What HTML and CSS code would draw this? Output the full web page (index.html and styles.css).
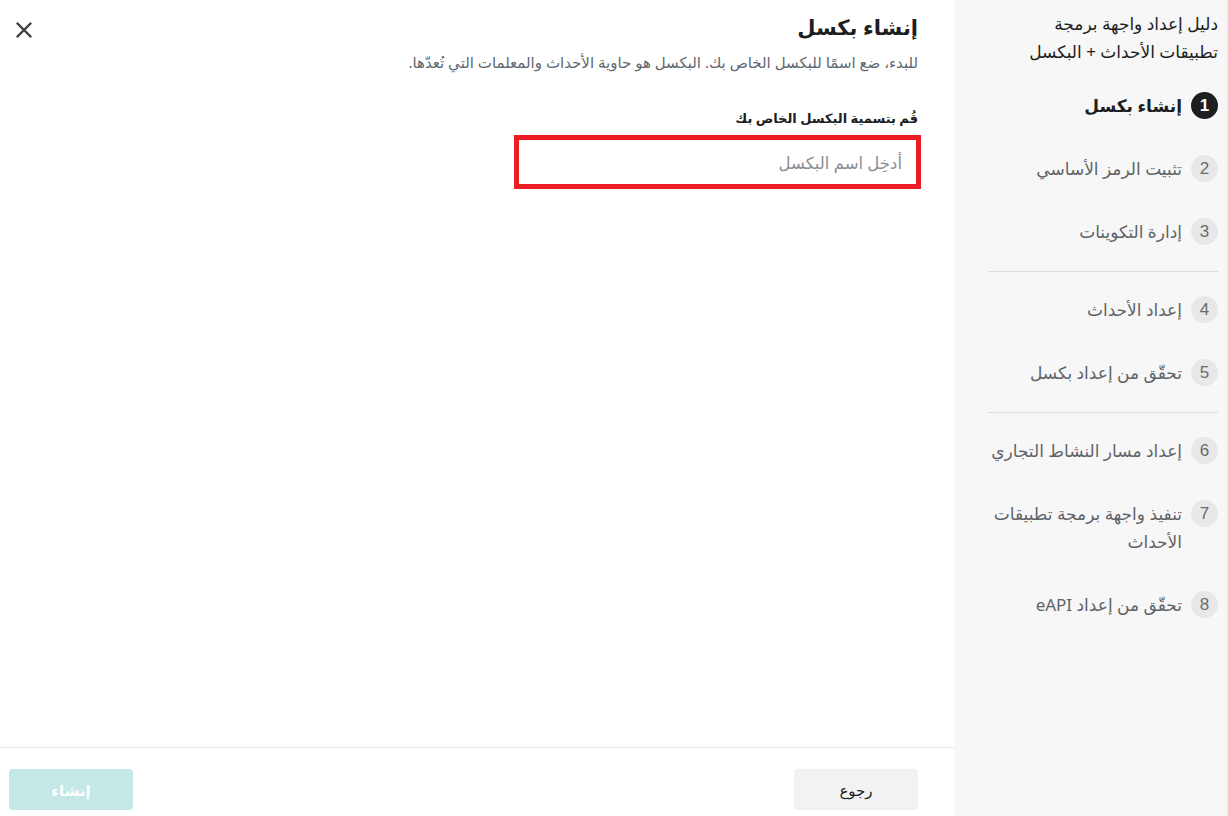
FILE: index.html
```html
<!DOCTYPE html>
<html lang="ar" dir="rtl">
<head>
<meta charset="utf-8">
<title>إنشاء بكسل</title>
<link rel="stylesheet" href="styles.css">
</head>
<body>
<div class="app">
  <aside class="sidebar">
    <div class="guide-title">دليل إعداد واجهة برمجة تطبيقات الأحداث + البكسل</div>
    <ul class="steps">
      <li class="step active"><span class="num">1</span><span class="label">إنشاء بكسل</span></li>
      <li class="step"><span class="num">2</span><span class="label">تثبيت الرمز الأساسي</span></li>
      <li class="step before-divider"><span class="num">3</span><span class="label">إدارة التكوينات</span></li>
      <li class="divider"></li>
      <li class="step"><span class="num">4</span><span class="label">إعداد الأحداث</span></li>
      <li class="step before-divider"><span class="num">5</span><span class="label">تحقّق من إعداد بكسل</span></li>
      <li class="divider"></li>
      <li class="step"><span class="num">6</span><span class="label">إعداد مسار النشاط التجاري</span></li>
      <li class="step"><span class="num">7</span><span class="label">تنفيذ واجهة برمجة تطبيقات الأحداث</span></li>
      <li class="step"><span class="num">8</span><span class="label">تحقّق من إعداد eAPI</span></li>
    </ul>
  </aside>
  <main class="main">
    <div class="content">
      <div class="header">
        <h1 class="title">إنشاء بكسل</h1>
        <button class="close" aria-label="إغلاق">
          <svg width="16" height="16" viewBox="0 0 16 16"><path d="M1.5 1.5 L14.5 14.5 M14.5 1.5 L1.5 14.5" stroke="#3d3d3d" stroke-width="2.4" stroke-linecap="round"/></svg>
        </button>
      </div>
      <p class="desc">للبدء، ضع اسمًا للبكسل الخاص بك. البكسل هو حاوية الأحداث والمعلمات التي تُعدّها.</p>
      <label class="field-label">قُم بتسمية البكسل الخاص بك</label>
      <div class="input-wrap"><input class="input" type="text" placeholder="أدخِل اسم البكسل"></div>
    </div>
    <footer class="footer">
      <button class="btn btn-back">رجوع</button>
      <button class="btn btn-create">إنشاء</button>
    </footer>
  </main>
</div>
</body>
</html>
```

FILE: styles.css
```css
* { box-sizing: border-box; }
html, body { margin: 0; height: 100%; }
body {
  font-family: "Noto Sans", "DejaVu Sans", sans-serif;
  color: #1c1e21;
  background: #fff;
}
.app {
  display: flex;
  height: 816px;
  width: 1228px;
}
.sidebar {
  width: 274px;
  flex: none;
  background: #f7f7f7;
  border-right: 1px solid #ececec;
  padding: 10px 9px 0 34px;
}
.guide-title {
  font-size: 17px;
  line-height: 28px;
  color: #1c1e21;
  padding-left: 28px;
}
.steps {
  list-style: none;
  margin: 26px 0 0 0;
  padding: 0;
}
.step {
  display: flex;
  align-items: flex-start;
  gap: 9px;
  margin-bottom: 35px;
  font-size: 17px;
  line-height: 28px;
  color: #5f6368;
}
.step.before-divider { margin-bottom: 25px; }
.step .num {
  flex: none;
  width: 27px;
  height: 27px;
  border-radius: 50%;
  background: #e8e8e8;
  color: #6b6b6b;
  font-family: "Liberation Sans", Arial, sans-serif;
  font-size: 17px;
  display: flex;
  align-items: center;
  justify-content: center;
}
.step.active { color: #1c1e21; font-weight: 600; }
.step.active .num { background: #1c1e21; color: #fff; font-weight: 700; }
.divider {
  height: 1px;
  background: #dcdcdc;
  margin: 0 0 24px 0;
}
.main {
  flex: 1;
  display: flex;
  flex-direction: column;
}
.content {
  flex: 1;
  padding: 12px 36px 0 14px;
}
.header {
  display: flex;
  justify-content: space-between;
  align-items: flex-start;
}
.title {
  margin: 0;
  font-size: 21px;
  font-weight: 700;
  line-height: 30px;
}
.close {
  border: 0;
  background: none;
  padding: 0;
  margin-top: 8px;
  width: 20px;
  height: 20px;
  display: flex;
  align-items: center;
  justify-content: center;
  cursor: pointer;
}
.desc {
  margin: 8px 0 0 0;
  font-size: 15px;
  line-height: 24px;
  color: #606770;
}
.field-label {
  display: block;
  margin-top: 33px;
  font-size: 13px;
  font-weight: 700;
  line-height: 22px;
  color: #1c1e21;
}
.input-wrap {
  margin-top: 6px;
  margin-right: -3px;
  width: 407px;
  height: 54px;
  border: 5px solid #ed1c24;
  background: #fff;
}
.input {
  width: 100%;
  height: 100%;
  border: 0;
  outline: none;
  padding: 0 14px;
  font-family: inherit;
  font-size: 16.5px;
  color: #1c1e21;
  background: transparent;
}
.input::placeholder { color: #8a8d91; }
.footer {
  height: 69px;
  flex: none;
  border-top: 1px solid #e6e6e6;
  display: flex;
  justify-content: space-between;
  align-items: flex-start;
  padding: 21px 36px 0 9px;
}
.btn {
  width: 124px;
  height: 41px;
  border: 0;
  border-radius: 4px;
  font-family: inherit;
  font-size: 15px;
}
.btn-back { background: #f2f2f2; color: #1c1e21; }
.btn-create { background: #c3e8e5; color: #fff; font-weight: 700; }
```
